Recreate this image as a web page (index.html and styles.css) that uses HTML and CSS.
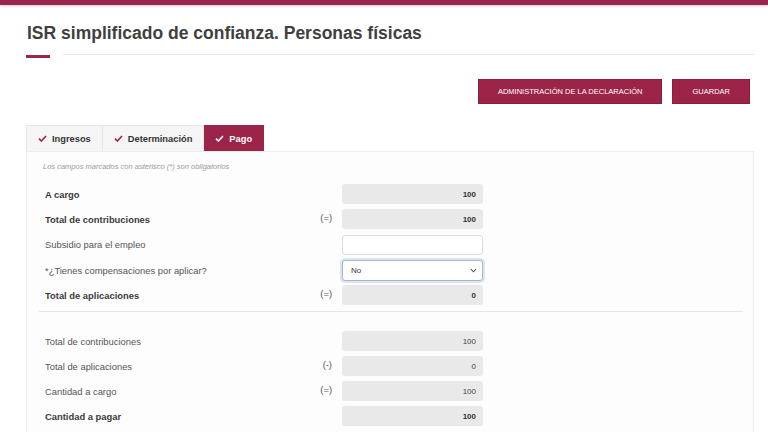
FILE: index.html
```html
<!DOCTYPE html>
<html lang="es">
<head>
  <meta charset="UTF-8">
  <meta name="viewport" content="width=device-width, initial-scale=1.0">
  <title>ISR simplificado de confianza</title>
  <link rel="stylesheet" href="styles.css">
</head>
<body>
  <div class="topbar"></div>

  <div class="container">
    <h1 class="page-title">ISR simplificado de confianza. Personas físicas</h1>
    <div class="title-rule">
      <span class="rule-red"></span>
      <span class="rule-grey"></span>
    </div>

    <div class="actions">
      <button class="btn">ADMINISTRACIÓN DE LA DECLARACIÓN</button>
      <button class="btn">GUARDAR</button>
    </div>

    <div class="tabs">
      <div class="tab">
        <svg class="check" viewBox="0 0 9 7"><path d="M1 3.6 L3.4 6 L8 1"/></svg>
        Ingresos
      </div>
      <div class="tab">
        <svg class="check" viewBox="0 0 9 7"><path d="M1 3.6 L3.4 6 L8 1"/></svg>
        Determinación
      </div>
      <div class="tab active">
        <svg class="check" viewBox="0 0 9 7"><path d="M1 3.6 L3.4 6 L8 1"/></svg>
        Pago
      </div>
    </div>

    <div class="panel">
      <p class="note">Los campos marcados con asterisco (*) son obligatorios</p>

      <div class="group">
        <div class="row strong">
          <label>A cargo</label>
          <span class="sign"></span>
          <input class="field" type="text" value="100" readonly>
        </div>
        <div class="row strong">
          <label>Total de contribuciones</label>
          <span class="sign">(=)</span>
          <input class="field" type="text" value="100" readonly>
        </div>
        <div class="row">
          <label>Subsidio para el empleo</label>
          <span class="sign"></span>
          <input class="field editable" type="text" value="">
        </div>
        <div class="row">
          <label>*¿Tienes compensaciones por aplicar?</label>
          <span class="sign"></span>
          <div class="select-wrap">
            <select class="select">
              <option>No</option>
            </select>
            <svg class="chevron" viewBox="0 0 8 5"><path d="M1 1 L4 4 L7 1"/></svg>
          </div>
        </div>
        <div class="row strong">
          <label>Total de aplicaciones</label>
          <span class="sign">(=)</span>
          <input class="field" type="text" value="0" readonly>
        </div>
      </div>

      <hr class="divider">

      <div class="group tight">
        <div class="row">
          <label>Total de contribuciones</label>
          <span class="sign"></span>
          <input class="field" type="text" value="100" readonly>
        </div>
        <div class="row">
          <label>Total de aplicaciones</label>
          <span class="sign">(-)</span>
          <input class="field" type="text" value="0" readonly>
        </div>
        <div class="row">
          <label>Cantidad a cargo</label>
          <span class="sign">(=)</span>
          <input class="field" type="text" value="100" readonly>
        </div>
        <div class="row strong">
          <label>Cantidad a pagar</label>
          <span class="sign"></span>
          <input class="field" type="text" value="100" readonly>
        </div>
      </div>
    </div>
  </div>
</body>
</html>
```

FILE: styles.css
```css
* {
  margin: 0;
  padding: 0;
  box-sizing: border-box;
}

body {
  font-family: 'Liberation Sans', Arial, sans-serif;
  background: #fff;
  color: #555;
  overflow: hidden;
}

.topbar {
  height: 5px;
  background: #9d2449;
  box-shadow: 0 1px 3px rgba(0, 0, 0, 0.2);
}

.container {
  margin: 0 14px 0 26px;
}

.page-title {
  margin-top: 17.5px;
  margin-left: 1px;
  font-size: 17.5px;
  line-height: 20px;
  font-weight: 700;
  color: #3f3f3f;
}

.title-rule {
  display: flex;
  align-items: flex-start;
  margin-top: 11.5px;
  height: 4px;
}

.rule-red {
  width: 24px;
  height: 3px;
  margin-top: 1px;
  background: #9d2449;
}

.rule-grey {
  flex: 1;
  height: 1px;
  margin-left: 13px;
  background: #e6e6e6;
}

.actions {
  display: flex;
  justify-content: flex-end;
  gap: 10px;
  margin-top: 21px;
  margin-right: 4px;
}

.btn {
  height: 25px;
  padding: 0 19px;
  background: #9d2449;
  border: 1px solid #8a1e3e;
  color: #fff;
  font-family: inherit;
  font-size: 7.5px;
  cursor: pointer;
}

.tabs {
  display: flex;
  margin-top: 21px;
  height: 26px;
}

.tab {
  display: flex;
  align-items: center;
  gap: 5px;
  padding: 0 11px 0 11px;
  background: #f5f5f5;
  border: 1px solid #e6e6e6;
  border-bottom: none;
  font-size: 9.3px;
  font-weight: 700;
  color: #333;
}

.tab + .tab {
  border-left: none;
}

.tab.active {
  background: #9d2449;
  border-color: #9d2449;
  color: #fff;
}

.check {
  width: 9px;
  height: 7px;
  fill: none;
  stroke: #9d2449;
  stroke-width: 1.6;
}

.tab.active .check {
  stroke: #fff;
}

.panel {
  border: 1px solid #ededed;
  background: #fdfdfd;
  padding: 10px 10px 20px 12px;
}

.note {
  font-size: 7.5px;
  line-height: 10px;
  font-style: italic;
  color: #9a9a9a;
  margin-left: 4px;
  margin-bottom: 12px;
}

.group {
  display: flex;
  flex-direction: column;
  gap: 5.3px;
}

.group.tight {
  gap: 5px;
}

.row {
  display: grid;
  grid-template-columns: 273px 24px 141px;
  align-items: center;
  height: 20px;
  padding-left: 6px;
  font-size: 9.4px;
}

.row label {
  color: #555;
}

.row.strong label {
  font-weight: 700;
  color: #3a3a3a;
}

.sign {
  text-align: right;
  padding-right: 10px;
  margin-top: -4px;
  color: #555;
}

.field {
  width: 141px;
  height: 20px;
  border: none;
  border-radius: 3px;
  background: #e9e9e9;
  padding: 0 7px;
  text-align: right;
  font-family: inherit;
  font-size: 8px;
  color: #444;
  outline: none;
}

.row.strong .field {
  font-weight: 700;
  color: #333;
}

.field.editable {
  background: #fff;
  border: 1px solid #dcdcdc;
}

.select-wrap {
  position: relative;
  width: 141px;
  height: 21px;
}

.select {
  appearance: none;
  -webkit-appearance: none;
  width: 100%;
  height: 100%;
  border: 1px solid #9fb8d6;
  border-radius: 3px;
  box-shadow: 0 0 0 2px rgba(120, 160, 210, 0.25);
  background: #fff;
  padding: 0 8px;
  font-family: inherit;
  font-size: 8px;
  color: #333;
  outline: none;
}

.chevron {
  position: absolute;
  right: 6px;
  top: 8px;
  width: 7px;
  height: 5px;
  fill: none;
  stroke: #555;
  stroke-width: 1.2;
}

.divider {
  border: none;
  border-top: 1px solid #e6e6e6;
  margin: 6px 0 19px;
}
```
